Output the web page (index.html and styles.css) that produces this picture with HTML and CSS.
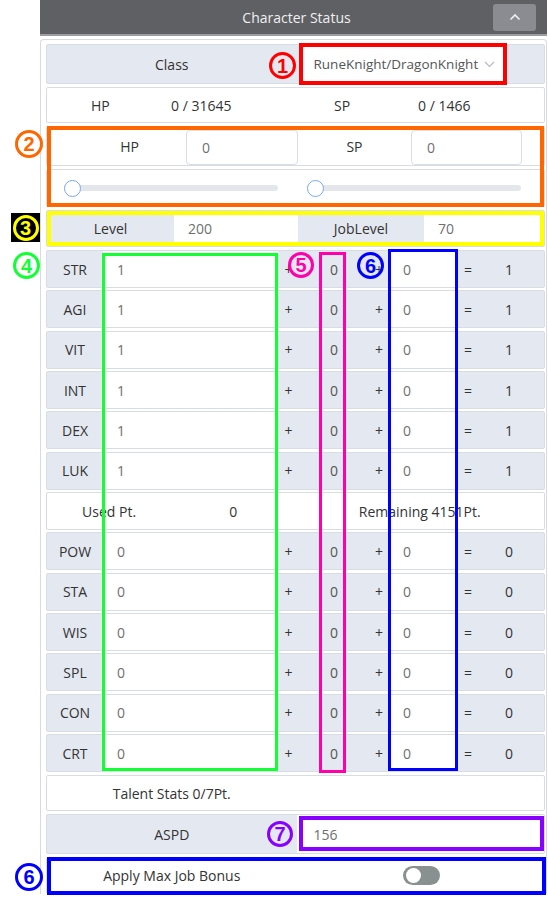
FILE: index.html
```html
<!DOCTYPE html>
<html>
<head>
<meta charset="utf-8">
<link rel="stylesheet" href="styles.css">
</head>
<body>
<div class="page">
  <div class="panel">
    <div class="panel-head">
      <span class="title">Character Status</span>
      <button class="collapse-btn"><svg width="12" height="8" viewBox="0 0 12 8"><polyline points="1.5,6.5 6,2 10.5,6.5" fill="none" stroke="#eeeeee" stroke-width="1.6"/></svg></button>
    </div>
    <div class="card">
      <div class="row row-class">
        <div class="cell lbl">Class</div>
        <div class="cell select-cell">
          <div class="select"><span>RuneKnight/DragonKnight</span><svg width="11" height="7" viewBox="0 0 11 7"><polyline points="1,1 5.5,5.5 10,1" fill="none" stroke="#b5b9c2" stroke-width="1.1"/></svg></div>
        </div>
      </div>
      <div class="row row-hp white">
        <span>HP</span><span>0 / 31645</span><span>SP</span><span>0 / 1466</span>
      </div>
      <div class="row row-hpsp white">
        <div class="cell lbl first">HP</div>
        <div class="cell"><div class="field">0</div></div>
        <div class="cell lbl">SP</div>
        <div class="cell"><div class="field">0</div></div>
      </div>
      <div class="row row-slider white">
        <div class="cell s1"><input type="range" class="range" min="0" max="100" value="0"></div>
        <div class="cell s2"><input type="range" class="range" min="0" max="100" value="0"></div>
      </div>
      <div class="row row-level">
        <div class="cell lbl">Level</div>
        <div class="cell inp">200</div>
        <div class="cell lbl">JobLevel</div>
        <div class="cell inp">70</div>
      </div>
      <div class="stats">
        <div class="row stat"><div class="cell lbl">STR</div><div class="cell inp">1</div><div class="cell op">+</div><div class="cell num">0</div><div class="cell op">+</div><div class="cell inp">0</div><div class="cell op">=</div><div class="cell tot">1</div></div>
        <div class="row stat"><div class="cell lbl">AGI</div><div class="cell inp">1</div><div class="cell op">+</div><div class="cell num">0</div><div class="cell op">+</div><div class="cell inp">0</div><div class="cell op">=</div><div class="cell tot">1</div></div>
        <div class="row stat"><div class="cell lbl">VIT</div><div class="cell inp">1</div><div class="cell op">+</div><div class="cell num">0</div><div class="cell op">+</div><div class="cell inp">0</div><div class="cell op">=</div><div class="cell tot">1</div></div>
        <div class="row stat"><div class="cell lbl">INT</div><div class="cell inp">1</div><div class="cell op">+</div><div class="cell num">0</div><div class="cell op">+</div><div class="cell inp">0</div><div class="cell op">=</div><div class="cell tot">1</div></div>
        <div class="row stat"><div class="cell lbl">DEX</div><div class="cell inp">1</div><div class="cell op">+</div><div class="cell num">0</div><div class="cell op">+</div><div class="cell inp">0</div><div class="cell op">=</div><div class="cell tot">1</div></div>
        <div class="row stat"><div class="cell lbl">LUK</div><div class="cell inp">1</div><div class="cell op">+</div><div class="cell num">0</div><div class="cell op">+</div><div class="cell inp">0</div><div class="cell op">=</div><div class="cell tot">1</div></div>
        <div class="row row-points white"><span>Used Pt.</span><span>0</span><span class="wide">Remaining 4151Pt.</span></div>
        <div class="row stat"><div class="cell lbl">POW</div><div class="cell inp">0</div><div class="cell op">+</div><div class="cell num">0</div><div class="cell op">+</div><div class="cell inp">0</div><div class="cell op">=</div><div class="cell tot">0</div></div>
        <div class="row stat"><div class="cell lbl">STA</div><div class="cell inp">0</div><div class="cell op">+</div><div class="cell num">0</div><div class="cell op">+</div><div class="cell inp">0</div><div class="cell op">=</div><div class="cell tot">0</div></div>
        <div class="row stat"><div class="cell lbl">WIS</div><div class="cell inp">0</div><div class="cell op">+</div><div class="cell num">0</div><div class="cell op">+</div><div class="cell inp">0</div><div class="cell op">=</div><div class="cell tot">0</div></div>
        <div class="row stat"><div class="cell lbl">SPL</div><div class="cell inp">0</div><div class="cell op">+</div><div class="cell num">0</div><div class="cell op">+</div><div class="cell inp">0</div><div class="cell op">=</div><div class="cell tot">0</div></div>
        <div class="row stat"><div class="cell lbl">CON</div><div class="cell inp">0</div><div class="cell op">+</div><div class="cell num">0</div><div class="cell op">+</div><div class="cell inp">0</div><div class="cell op">=</div><div class="cell tot">0</div></div>
        <div class="row stat"><div class="cell lbl">CRT</div><div class="cell inp">0</div><div class="cell op">+</div><div class="cell num">0</div><div class="cell op">+</div><div class="cell inp">0</div><div class="cell op">=</div><div class="cell tot">0</div></div>
      </div>
      <div class="row row-half white row-talent"><span>Talent Stats 0/7Pt.</span></div>
      <div class="row row-half row-aspd">
        <div class="cell lbl">ASPD</div>
        <div class="cell inp">156</div>
      </div>
      <div class="row row-half white row-apply">
        <span>Apply Max Job Bonus</span>
        <span class="toggle-cell"><span class="toggle"><span class="knob"></span></span></span>
      </div>
    </div>
  </div>

  <div class="mark m-red"></div>
  <div class="mark m-orange"></div>
  <div class="mark m-yellow"></div>
  <div class="mark m-green"></div>
  <div class="mark m-pink"></div>
  <div class="mark m-blue"></div>
  <div class="mark m-purple"></div>
  <div class="mark m-blue2"></div>

  <div class="badge b1">1</div>
  <div class="badge b2">2</div>
  <div class="badge-sq"><div class="badge b3">3</div></div>
  <div class="badge b4">4</div>
  <div class="badge b5">5</div>
  <div class="badge b6">6</div>
  <div class="badge b7">7</div>
  <div class="badge b6b">6</div>
</div>
</body>
</html>
```

FILE: styles.css
```css
* { box-sizing: border-box; }
body {
  margin: 0;
  background: #fff;
  font-family: "Open Sans", "Noto Sans", sans-serif;
  font-size: 14px;
  color: #333;
}
.page {
  position: relative;
  width: 548px;
  height: 900px;
  overflow: hidden;
}
.panel {
  margin-left: 40px;
  width: 507px;
}
.panel-head {
  display: grid;
  height: 36px;
  background: #5f6064;
  border-bottom: 2px solid #9c9da1;
  align-items: center;
}
.panel-head > * { grid-area: 1 / 1; }
.title {
  justify-self: center;
  padding-left: 6px;
  color: #f0f0f0;
  font-size: 14px;
}
.collapse-btn {
  justify-self: end;
  margin-right: 11px;
  width: 43px;
  height: 27px;
  padding: 0;
  border: 0;
  border-radius: 3px;
  background: #8b8c91;
  display: flex;
  align-items: center;
  justify-content: center;
}
.card {
  margin-top: 3px;
  border: 1px solid #d9dae0;
  border-bottom: 0;
  border-radius: 4px 4px 0 0;
  padding: 4px 1px 0 5px;
  display: flex;
  flex-direction: column;
  gap: 3px;
}
.row {
  display: grid;
  border: 1px solid #d8dce3;
  border-radius: 2px;
  background: #e4e8f0;
  align-items: center;
}
.row.white { background: #fff; }
.cell {
  height: 100%;
  display: flex;
  align-items: center;
}
.lbl { justify-content: center; color: #333; }
.inp {
  background: #fff;
  color: #6f6f6f;
  padding-left: 14px;
}

/* class row */
.row-class { height: 40px; grid-template-columns: 249.5px 1fr; }
.select-cell { padding-left: 5px; }
.select {
  width: 206px;
  height: 36px;
  background: #fff;
  display: flex;
  align-items: center;
  padding: 0 13px 0 12px;
  color: #555;
  font-size: 13.5px;
}
.select svg { margin-left: auto; }

/* hp row */
.row-hp {
  height: 36px;
  grid-template-columns: 80px 163px 84px 1fr;
  padding-left: 44px;
}

/* hp/sp inputs */
.row-hpsp {
  height: 40px;
  grid-template-columns: 139px 112px 113px 111px 1fr;
  align-items: end;
}
.row-hpsp .cell { height: auto; }
.row-hpsp .lbl { align-self: center; }
.row-hpsp .first { padding-left: 26px; }
.field {
  width: 100%;
  height: 35px;
  border: 1px solid #dadde3;
  border-radius: 4px;
  background: #fff;
  color: #6f6f6f;
  padding-left: 15px;
  display: flex;
  align-items: center;
}

/* sliders */
.row-slider {
  height: 38px;
  grid-template-columns: 249.5px 1fr;
}
.s1 { padding-left: 17px; }
.s2 { padding-left: 10px; }
.range {
  -webkit-appearance: none;
  appearance: none;
  width: 214px;
  height: 6px;
  margin: 0;
  border-radius: 3px;
  background: #e3e6eb;
  outline: none;
}
.range::-webkit-slider-thumb {
  -webkit-appearance: none;
  appearance: none;
  width: 17px;
  height: 17px;
  border-radius: 50%;
  background: #fff;
  border: 1.5px solid #7ba8ea;
}

/* level */
.row-level {
  height: 37px;
  grid-template-columns: 127px 124px 126px 1fr;
}

/* stats */
.stats {
  display: flex;
  flex-direction: column;
  gap: 2.35px;
}
.stat {
  height: 38px;
  grid-template-columns: 56px 175px 21px 70px 20px 69px 20px 1fr;
}
.op, .num { justify-content: center; color: #333; }
.num { color: #555; }
.tot { justify-content: center; padding-right: 4px; color: #333; }
.row-points {
  height: 38px;
  grid-template-columns: repeat(4, 1fr);
  text-align: center;
}
.row-points .wide { grid-column: span 2; }

.row-half { grid-template-columns: 249.5px 1fr; }
.row-talent { height: 36px; }
.row-talent span, .row-apply > span:first-child { text-align: center; }
.row-aspd { height: 40px; }
.row-aspd .inp { padding-left: 17px; }
.row-apply { height: 37px; }
.toggle-cell { display: flex; justify-content: center; padding-left: 3px; }
.toggle {
  width: 37px;
  height: 19px;
  border-radius: 10px;
  background: #889190;
  display: flex;
  align-items: center;
  padding-left: 3px;
}
.knob {
  width: 15px;
  height: 15px;
  border-radius: 50%;
  background: #fff;
}

/* annotations */
.mark {
  position: absolute;
  border: 4px solid;
}
.m-red { left: 299px; top: 43px; width: 208px; height: 42px; border-color: #ff0000; }
.m-orange { left: 47px; top: 126px; width: 497px; height: 81px; border-color: #ff6600; }
.m-yellow { left: 47px; top: 211px; width: 497px; height: 35px; border-color: #ffff00; }
.m-green { left: 102px; top: 253px; width: 176px; height: 518px; border-width: 3.5px; border-color: #11ff33; }
.m-pink { left: 319px; top: 252px; width: 27px; height: 521px; border-width: 3.5px; border-color: #ff00aa; }
.m-blue { left: 388px; top: 249px; width: 70px; height: 522px; border-width: 3.5px; border-color: #0000ff; }
.m-purple { left: 299px; top: 816px; width: 245px; height: 35px; border-color: #8800ff; }
.m-blue2 { left: 47px; top: 857px; width: 499px; height: 38px; border-color: #0000ff; }

.badge {
  position: absolute;
  width: 27px;
  height: 27px;
  border-radius: 50%;
  border: 3px solid;
  display: flex;
  align-items: center;
  justify-content: center;
  font-family: "Liberation Sans", sans-serif;
  font-weight: bold;
  font-size: 20px;
  line-height: 1;
}
.b1 { left: 269px; top: 52px; color: #ff0000; }
.b2 { left: 15px; top: 130px; width: 28px; height: 28px; color: #ff6600; }
.badge-sq {
  position: absolute;
  left: 11px;
  top: 213px;
  width: 29px;
  height: 29px;
  background: #000;
}
.b3 { left: 1.5px; top: 1.5px; width: 26px; height: 26px; color: #ffff00; }
.b4 { left: 13px; top: 252px; color: #11ff33; }
.b5 { left: 288px; top: 252px; width: 26px; height: 26px; color: #ff00aa; }
.b6 { left: 357px; top: 252px; color: #0000ff; }
.b7 { left: 267px; top: 821px; width: 26px; height: 26px; color: #8800ff; }
.b6b { left: 15px; top: 863px; width: 28px; height: 28px; color: #0000ff; }
```
